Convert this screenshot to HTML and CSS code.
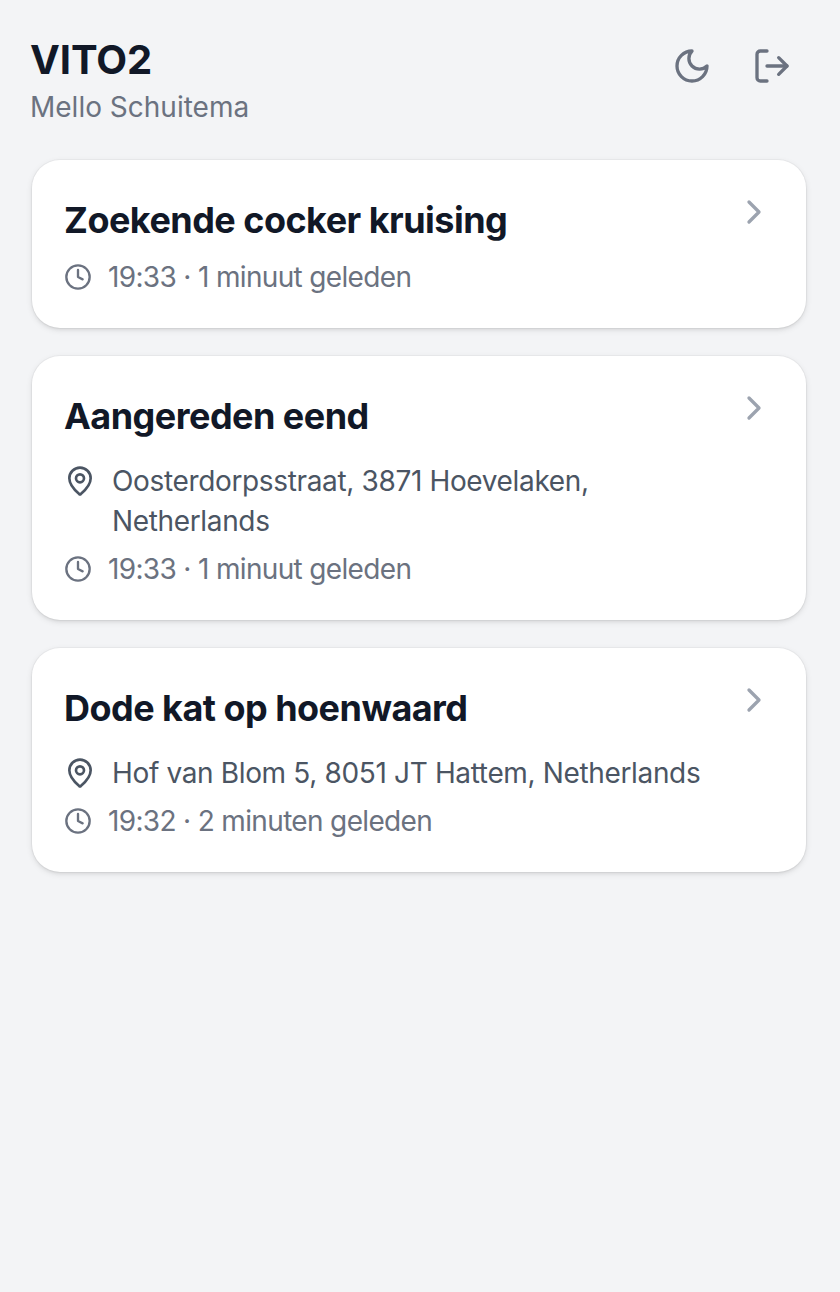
FILE: index.html
```html
<!DOCTYPE html>
<html lang="nl">
<head>
<meta charset="utf-8">
<title>VITO2</title>
<link rel="stylesheet" href="styles.css">
</head>
<body>
<main class="page">
  <header class="header">
    <div class="brand">
      <h1 class="app-name">VITO2</h1>
      <p class="user-name">Mello Schuitema</p>
    </div>
    <div class="actions">
      <svg class="action-icon" viewBox="0 0 24 24" fill="none" stroke="currentColor" stroke-width="2" stroke-linecap="round" stroke-linejoin="round"><path d="M12 3a6 6 0 0 0 9 9 9 9 0 1 1-9-9Z"/></svg>
      <svg class="action-icon" viewBox="0 0 24 24" fill="none" stroke="currentColor" stroke-width="2" stroke-linecap="round" stroke-linejoin="round"><path d="M9 21H5a2 2 0 0 1-2-2V5a2 2 0 0 1 2-2h4"/><path d="m16 17 5-5-5-5"/><path d="M21 12H9"/></svg>
    </div>
  </header>
  <section class="list">
    <article class="card">
      <div class="card-top">
        <h2 class="card-title">Zoekende cocker kruising</h2>
        <svg class="chevron" viewBox="0 0 24 24" fill="none" stroke="currentColor" stroke-width="2" stroke-linecap="round" stroke-linejoin="round"><path d="m9 18 6-6-6-6"/></svg>
      </div>
      <div class="time"><svg class="clock" viewBox="0 0 24 24" fill="none" stroke="currentColor" stroke-width="2" stroke-linecap="round" stroke-linejoin="round"><circle cx="12" cy="12" r="10"/><path d="M12 6v6l4 2"/></svg><span>19:33 · 1 minuut geleden</span></div>
    </article>
    <article class="card">
      <div class="card-top">
        <h2 class="card-title">Aangereden eend</h2>
        <svg class="chevron" viewBox="0 0 24 24" fill="none" stroke="currentColor" stroke-width="2" stroke-linecap="round" stroke-linejoin="round"><path d="m9 18 6-6-6-6"/></svg>
      </div>
      <div class="place"><svg class="pin" viewBox="0 0 24 24" fill="none" stroke="currentColor" stroke-width="2" stroke-linecap="round" stroke-linejoin="round"><path d="M20 10c0 5-5.500 10.200-7.400 11.800a1 1 0 0 1-1.200 0C9.500 20.200 4 15 4 10a8 8 0 0 1 16 0"/><circle cx="12" cy="10" r="3"/></svg><span>Oosterdorpsstraat, 3871 Hoevelaken, Netherlands</span></div>
      <div class="time"><svg class="clock" viewBox="0 0 24 24" fill="none" stroke="currentColor" stroke-width="2" stroke-linecap="round" stroke-linejoin="round"><circle cx="12" cy="12" r="10"/><path d="M12 6v6l4 2"/></svg><span>19:33 · 1 minuut geleden</span></div>
    </article>
    <article class="card">
      <div class="card-top">
        <h2 class="card-title">Dode kat op hoenwaard</h2>
        <svg class="chevron" viewBox="0 0 24 24" fill="none" stroke="currentColor" stroke-width="2" stroke-linecap="round" stroke-linejoin="round"><path d="m9 18 6-6-6-6"/></svg>
      </div>
      <div class="place"><svg class="pin" viewBox="0 0 24 24" fill="none" stroke="currentColor" stroke-width="2" stroke-linecap="round" stroke-linejoin="round"><path d="M20 10c0 5-5.500 10.200-7.400 11.800a1 1 0 0 1-1.200 0C9.500 20.200 4 15 4 10a8 8 0 0 1 16 0"/><circle cx="12" cy="10" r="3"/></svg><span>Hof van Blom 5, 8051 JT Hattem, Netherlands</span></div>
      <div class="time"><svg class="clock" viewBox="0 0 24 24" fill="none" stroke="currentColor" stroke-width="2" stroke-linecap="round" stroke-linejoin="round"><circle cx="12" cy="12" r="10"/><path d="M12 6v6l4 2"/></svg><span>19:32 · 2 minuten geleden</span></div>
    </article>
  </section>
</main>
</body>
</html>
```
FILE: styles.css
```css
* { box-sizing: border-box; }
html, body { margin: 0; padding: 0; }
body {
  background: #f3f4f6;
  font-family: Inter, "Liberation Sans", sans-serif;
  min-height: 1292px;
}
.page { padding: 36px 34px 0 32px; }
.header {
  display: flex;
  justify-content: space-between;
  align-items: flex-start;
  margin-bottom: 33px;
  padding-right: 14px;
}
.brand { margin-left: -2px; }
.app-name {
  margin: 0;
  font-size: 40px;
  line-height: 48px;
  font-weight: 700;
  color: #111827;
  letter-spacing: -0.1px;
}
.user-name {
  margin: 3px 0 0;
  font-size: 28px;
  line-height: 40px;
  font-weight: 400;
  color: #6b7280;
  letter-spacing: 0;
}
.actions { display: flex; gap: 40px; padding-top: 10px; }
.action-icon { width: 40px; height: 40px; color: #6b7280; display: block; }
.list { display: flex; flex-direction: column; gap: 28px; }
.card {
  background: #fff;
  border-radius: 28px;
  padding: 32px 32px 31px;
  box-shadow: 0 0 0 1px rgba(0,0,0,.03), 0 2px 6px rgba(0,0,0,.1), 0 2px 4px -2px rgba(0,0,0,.1);
}
.card-top { display: flex; justify-content: space-between; align-items: flex-start; margin-bottom: 9px; }
.card-title {
  margin: 0;
  font-size: 36px;
  line-height: 56px;
  font-weight: 700;
  color: #111827;
  letter-spacing: -0.53px;
}
.chevron { width: 40px; height: 40px; color: #9ca3af; flex: none; display: block; }
.place {
  display: flex;
  gap: 16px;
  align-items: flex-start;
  font-size: 28px;
  line-height: 40px;
  color: #4b5563;
  margin: 17px 0 8px;
  letter-spacing: -0.35px;
  padding-right: 64px;
}
.pin { width: 32px; height: 32px; flex: none; display: block; margin-top: 4px; }
.time {
  display: flex;
  gap: 16px;
  align-items: center;
  font-size: 28px;
  line-height: 40px;
  color: #6b7280;
  letter-spacing: -0.66px;
}
.clock { width: 28px; height: 28px; flex: none; display: block; }
```
